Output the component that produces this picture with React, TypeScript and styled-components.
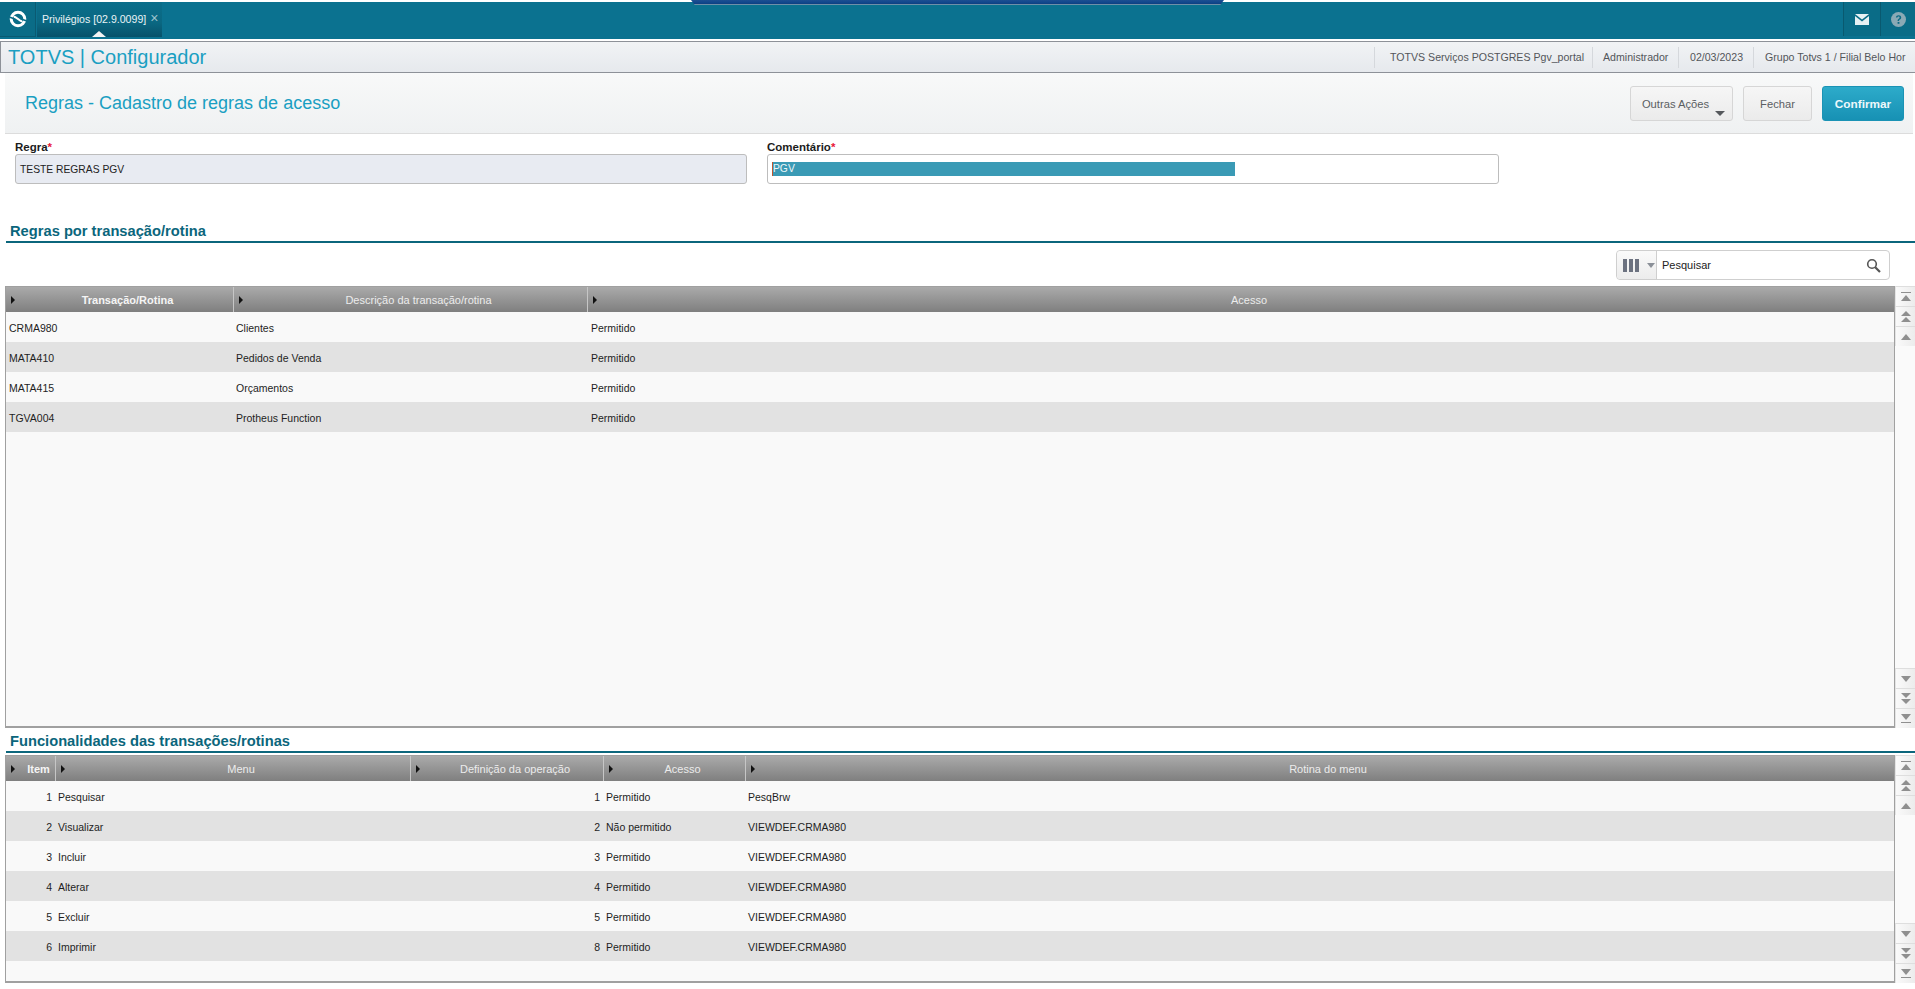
import React from "react";
import styled, { createGlobalStyle } from "styled-components";

const Global = createGlobalStyle`
  html, body { margin: 0; padding: 0; background: #fff; overflow: hidden; }
  body { font-family: "Liberation Sans", Arial, sans-serif; }
`;

const Page = styled.div`
  position: relative;
  width: 1915px;
  height: 989px;
  overflow: hidden;
  display: flex;
  flex-direction: column;
  padding-top: 2px;
  box-sizing: border-box;
`;

const Notch = styled.div`
  position: absolute;
  left: 691px;
  top: 0;
  width: 533px;
  height: 5px;
  background: linear-gradient(#1d4f92, #12478c 60%, #0f3f80);
  border-bottom: 1px solid #6f8fa8;
  box-sizing: border-box;
  clip-path: polygon(0 0, 100% 0, 99.3% 100%, 0.7% 100%);
`;

const TopBar = styled.div`
  height: 37px;
  flex: none;
  background: #0b7290;
  display: flex;
  align-items: stretch;
`;

const HomeTile = styled.div`
  width: 36px;
  height: 35px;
  background: #0a6c87;
  border-right: 1px solid #0a5a72;
  border-bottom: 1px solid #0a5a72;
  box-sizing: border-box;
  display: flex;
  align-items: center;
  justify-content: center;
`;

const Tab = styled.div`
  position: relative;
  margin-left: 1px;
  width: 125px;
  height: 35px;
  box-sizing: border-box;
  background: linear-gradient(#0b6e8b 0%, #0a6781 60%, #07526a 100%);
  display: flex;
  align-items: center;
  padding: 0 0 2px 5px;
  color: #e9f3f6;
  font-size: 10.6px;
  white-space: nowrap;
`;

const TabClose = styled.span`
  margin-left: 4px;
  color: #9cc3cf;
  font-size: 14px;
  position: relative;
  top: -1px;
`;

const TabPointer = styled.div`
  position: absolute;
  left: 55px;
  bottom: 0;
  width: 0;
  height: 0;
  border-left: 7px solid transparent;
  border-right: 7px solid transparent;
  border-bottom: 6px solid #f4f4f4;
`;

const TopSpacer = styled.div`
  flex: 1;
`;

const IconTile = styled.div<{ $w: number }>`
  width: ${(p) => p.$w}px;
  height: 34px;
  background: #0a6c87;
  border-left: 1px solid #09596f;
  box-sizing: border-box;
  display: flex;
  align-items: center;
  justify-content: center;
`;

const AppBar = styled.div`
  margin-top: 2px;
  height: 32px;
  flex: none;
  box-sizing: border-box;
  background: linear-gradient(#f1f3f5, #e6e9ed);
  border-top: 1px solid #8d9198;
  border-bottom: 1px solid #8d9198;
  border-left: 1px solid #8d9198;
  display: flex;
  align-items: center;
`;

const AppName = styled.div`
  flex: 1;
  padding-left: 7px;
  font-size: 20px;
  color: #1a9fc2;
  white-space: nowrap;
`;

const AppInfo = styled.div<{ $w: number; $pad: number }>`
  display: flex;
  align-items: center;
  height: 21px;
  width: ${(p) => p.$w}px;
  padding-left: ${(p) => p.$pad}px;
  border-left: 1px solid #d5d8dc;
  font-size: 10.6px;
  color: #53565a;
  white-space: nowrap;
  box-sizing: border-box;
`;

const TitleBand = styled.div`
  margin-left: 5px;
  margin-right: 2px;
  height: 61px;
  flex: none;
  box-sizing: border-box;
  background: linear-gradient(#f8f9f9, #eff1f2);
  border-bottom: 1px solid #dcdcdc;
  display: flex;
  align-items: flex-start;
  padding: 13px 9px 0 20px;
  gap: 10px;
`;

const PageTitle = styled.div`
  flex: 1;
  font-size: 18px;
  line-height: 35px;
  color: #1a9fc2;
  white-space: nowrap;
`;

const ActionButton = styled.div<{ $w: number; $primary?: boolean }>`
  position: relative;
  width: ${(p) => p.$w}px;
  height: 35px;
  box-sizing: border-box;
  border-radius: 3px;
  border: 1px solid ${(p) => (p.$primary ? "#1a93b5" : "#d6d6d6")};
  background: ${(p) =>
    p.$primary ? "linear-gradient(#2dabca, #1791b4)" : "linear-gradient(#f6f6f6, #ebebeb)"};
  color: ${(p) => (p.$primary ? "#eef8fb" : "#5b5e62")};
  font-weight: ${(p) => (p.$primary ? 700 : 400)};
  font-size: ${(p) => (p.$primary ? 11.8 : 11.2)}px;
  display: flex;
  align-items: center;
  justify-content: center;
`;

const MoreLabel = styled.span`
  margin-right: 12px;
`;

const DropCaret = styled.div`
  position: absolute;
  right: 7px;
  bottom: 4px;
  width: 0;
  height: 0;
  border-left: 5px solid transparent;
  border-right: 5px solid transparent;
  border-top: 5px solid #55585c;
`;

const FormRow = styled.div`
  flex: none;
  height: 78px;
  box-sizing: border-box;
  padding: 6px 0 0 15px;
  display: grid;
  grid-template-columns: 732px 732px;
  column-gap: 20px;
`;

const Field = styled.div`
  display: flex;
  flex-direction: column;
`;

const FieldLabel = styled.div`
  height: 14px;
  font-size: 11.5px;
  font-weight: 700;
  color: #1c1c1c;
  line-height: 15px;
`;

const Req = styled.span`
  color: #e8173a;
`;

const FieldBox = styled.div<{ $readonly?: boolean }>`
  height: 30px;
  box-sizing: border-box;
  border: 1px solid #bdbdbd;
  border-radius: 3px;
  background: ${(p) => (p.$readonly ? "#e8ebf2" : "#fff")};
  display: flex;
  align-items: center;
  padding-left: 4px;
  font-size: 10.3px;
  color: #222;
`;

const Selected = styled.div`
  width: 463px;
  height: 14px;
  line-height: 14px;
  background: #3a9ab5;
  color: #eef6f8;
  border-left: 1px solid #c0562f;
  box-sizing: border-box;
`;

const SectionTitle = styled.div<{ $h: number }>`
  flex: none;
  margin-left: 6px;
  height: ${(p) => p.$h}px;
  box-sizing: border-box;
  border-bottom: 2px solid #0b667c;
  padding: 0 0 2px 4px;
  display: flex;
  align-items: flex-end;
  font-size: 14.7px;
  line-height: 16px;
  font-weight: 700;
  color: #0b667c;
  white-space: nowrap;
`;

const SearchRow = styled.div`
  flex: none;
  height: 43px;
  display: flex;
  align-items: flex-start;
  justify-content: flex-end;
  padding: 7px 25px 0 0;
  box-sizing: border-box;
`;

const SearchBox = styled.div`
  width: 274px;
  height: 30px;
  box-sizing: border-box;
  border: 1px solid #cfcfcf;
  border-radius: 4px;
  display: flex;
  align-items: stretch;
  background: #fff;
`;

const SearchToggle = styled.div`
  width: 40px;
  box-sizing: border-box;
  border-right: 1px solid #cfcfcf;
  background: linear-gradient(#fafafa, #ececec);
  border-radius: 4px 0 0 4px;
  display: flex;
  align-items: center;
  padding-left: 6px;
  gap: 8px;
`;

const ColBars = styled.div`
  display: flex;
  gap: 2px;
`;

const ColBar = styled.div`
  width: 4px;
  height: 13px;
  background: #6c7280;
`;

const SmallCaret = styled.div`
  width: 0;
  height: 0;
  border-left: 4px solid transparent;
  border-right: 4px solid transparent;
  border-top: 5px solid #8b9098;
`;

const SearchText = styled.div`
  flex: 1;
  display: flex;
  align-items: center;
  padding-left: 5px;
  font-size: 11px;
  color: #222;
`;

const SearchIcon = styled.div`
  display: flex;
  align-items: center;
  padding-right: 8px;
`;

const GridArea = styled.div<{ $h: number; $top?: number }>`
  flex: none;
  height: ${(p) => p.$h}px;
  margin-top: ${(p) => p.$top ?? 0}px;
  margin-left: 5px;
  display: flex;
`;

const Table = styled.div`
  width: 1890px;
  flex: none;
  box-sizing: border-box;
  border: 1px solid #a0a0a0;
  border-bottom-width: 2px;
  background: #f9f9f9;
  display: flex;
  flex-direction: column;
  overflow: hidden;
`;

const Row = styled.div<{ $cols: string; $alt?: boolean }>`
  display: grid;
  grid-template-columns: ${(p) => p.$cols};
  height: 30px;
  flex: none;
  background: ${(p) => (p.$alt ? "#e2e2e2" : "#f9f9f9")};
  font-size: 10.5px;
  color: #1e1e1e;
`;

const HeadRow = styled.div<{ $cols: string }>`
  display: grid;
  grid-template-columns: ${(p) => p.$cols};
  height: 25px;
  flex: none;
  background: linear-gradient(#aaaaaa, #7f7f7f);
  font-size: 11px;
`;

const HeadCell = styled.div<{ $strong?: boolean }>`
  display: flex;
  align-items: center;
  padding-left: 5px;
  border-right: 1px solid #c6c6c6;
  box-sizing: border-box;
  color: ${(p) => (p.$strong ? "#f5f5f5" : "#ececec")};
  font-weight: ${(p) => (p.$strong ? 700 : 400)};
  white-space: nowrap;
  &:last-child { border-right: 0; }
`;

const HeadArrow = styled.div`
  flex: none;
  width: 0;
  height: 0;
  border-top: 4px solid transparent;
  border-bottom: 4px solid transparent;
  border-left: 4px solid #111;
  margin-right: 7px;
`;

const HeadLabel = styled.div`
  flex: 1;
  text-align: center;
`;

const Cell = styled.div<{ $right?: boolean; $inset?: number }>`
  display: flex;
  align-items: center;
  justify-content: ${(p) => (p.$right ? "flex-end" : "flex-start")};
  padding: ${(p) => (p.$right ? "1px 4px 0 0" : `1px 0 0 ${p.$inset ?? 2}px`)};
  white-space: nowrap;
  box-sizing: border-box;
`;

const ScrollColumn = styled.div`
  flex: 1;
  display: flex;
  flex-direction: column;
  justify-content: space-between;
  background: #fafafa;
`;

const ScrollGroup = styled.div`
  display: flex;
  flex-direction: column;
`;

const ScrollBtn = styled.div`
  height: 20px;
  box-sizing: border-box;
  background: linear-gradient(90deg, #fafafa, #ececec);
  border-top: 1px solid #dedede;
  border-left: 1px solid #e4e4e4;
  display: flex;
  align-items: center;
  justify-content: center;
`;

const ScrollSvg = styled.svg`
  display: block;
  fill: #8f8f8f;
`;

const Logo = () => (
  <svg width="20" height="20" viewBox="0 0 20 20">
    <circle cx="10" cy="10" r="6.8" fill="none" stroke="#fff" strokeWidth="3" />
    <path d="M5.5 7.6 C8 7.2 12 12.8 14.5 12.4" fill="none" stroke="#fff" strokeWidth="2.2" />
    <path d="M1.8 8.2 L5.6 9.6 M18.2 11.8 L14.4 10.4" fill="none" stroke="#0a6c87" strokeWidth="1.6" />
  </svg>
);

const Mail = () => (
  <svg width="14" height="11" viewBox="0 0 14 11">
    <path d="M0 0h14L7 5.5z" fill="#e6f0f3" />
    <path d="M0 2l7 5.5L14 2v9H0z" fill="#e6f0f3" />
  </svg>
);

const Help = () => (
  <svg width="15" height="15" viewBox="0 0 15 15">
    <circle cx="7.5" cy="7.5" r="7.5" fill="#8aa9b5" />
    <path d="M4.9 5.6c.2-1.6 1.2-2.4 2.7-2.4 1.5 0 2.6.9 2.6 2.2 0 1-.5 1.5-1.3 2.1-.7.5-.9.8-.9 1.5H6.6c0-1.1.3-1.6 1.1-2.2.6-.5.9-.8.9-1.3 0-.5-.4-.9-1-.9-.7 0-1 .4-1.1 1z" fill="#0a6a85" />
    <rect x="6.6" y="10" width="1.8" height="1.8" fill="#0a6a85" />
  </svg>
);

const Magnifier = () => (
  <svg width="15" height="15" viewBox="0 0 15 15">
    <circle cx="6" cy="6" r="4.3" fill="none" stroke="#555" strokeWidth="1.6" />
    <path d="M9.2 9.2 L14 14" stroke="#555" strokeWidth="2.2" />
  </svg>
);

type ScrollKind = "first" | "pageUp" | "up" | "down" | "pageDown" | "last";

const ScrollIcon = ({ kind }: { kind: ScrollKind }) => {
  const shapes: Record<ScrollKind, React.ReactNode> = {
    first: (<><rect x="1" y="1" width="10" height="1" /><path d="M6 4l5 6H1z" /></>),
    pageUp: (<><path d="M6 0l5 5H1z" /><path d="M6 6l5 5H1z" /></>),
    up: <path d="M6 3l5 6H1z" />,
    down: <path d="M1 3h10l-5 6z" />,
    pageDown: (<><path d="M1 0h10L6 5z" /><path d="M1 6h10l-5 5z" /></>),
    last: (<><path d="M1 1h10L6 7z" /><rect x="1" y="9" width="10" height="1" /></>),
  };
  return <ScrollSvg width="12" height="12" viewBox="0 0 12 12">{shapes[kind]}</ScrollSvg>;
};

const ScrollBar = () => (
  <ScrollColumn>
    <ScrollGroup>
      {(["first", "pageUp", "up"] as ScrollKind[]).map((k) => (
        <ScrollBtn key={k}><ScrollIcon kind={k} /></ScrollBtn>
      ))}
    </ScrollGroup>
    <ScrollGroup>
      {(["down", "pageDown", "last"] as ScrollKind[]).map((k) => (
        <ScrollBtn key={k}><ScrollIcon kind={k} /></ScrollBtn>
      ))}
    </ScrollGroup>
  </ScrollColumn>
);

const cols1 = "228px 354px 1fr";
const rows1 = [
  ["CRMA980", "Clientes", "Permitido"],
  ["MATA410", "Pedidos de Venda", "Permitido"],
  ["MATA415", "Orçamentos", "Permitido"],
  ["TGVA004", "Protheus Function", "Permitido"],
];

const cols2 = "50px 355px 193px 142px 1fr";
const rows2 = [
  ["1", "Pesquisar", "1", "Permitido", "PesqBrw"],
  ["2", "Visualizar", "2", "Não permitido", "VIEWDEF.CRMA980"],
  ["3", "Incluir", "3", "Permitido", "VIEWDEF.CRMA980"],
  ["4", "Alterar", "4", "Permitido", "VIEWDEF.CRMA980"],
  ["5", "Excluir", "5", "Permitido", "VIEWDEF.CRMA980"],
  ["6", "Imprimir", "8", "Permitido", "VIEWDEF.CRMA980"],
];

export default function App() {
  return (
    <Page>
      <Global />
      <Notch />
      <TopBar>
        <HomeTile><Logo /></HomeTile>
        <Tab>
          Privilégios [02.9.0099]
          <TabClose>×</TabClose>
          <TabPointer />
        </Tab>
        <TopSpacer />
        <IconTile $w={37}><Mail /></IconTile>
        <IconTile $w={35}><Help /></IconTile>
      </TopBar>
      <AppBar>
        <AppName>TOTVS | Configurador</AppName>
        <AppInfo $w={218} $pad={15}>TOTVS Serviços POSTGRES Pgv_portal</AppInfo>
        <AppInfo $w={86} $pad={10}>Administrador</AppInfo>
        <AppInfo $w={75} $pad={11}>02/03/2023</AppInfo>
        <AppInfo $w={162} $pad={11}>Grupo Totvs 1 / Filial Belo Hor</AppInfo>
      </AppBar>
      <TitleBand>
        <PageTitle>Regras - Cadastro de regras de acesso</PageTitle>
        <ActionButton $w={103}>
          <MoreLabel>Outras Ações</MoreLabel>
          <DropCaret />
        </ActionButton>
        <ActionButton $w={69}>Fechar</ActionButton>
        <ActionButton $w={82} $primary>Confirmar</ActionButton>
      </TitleBand>
      <FormRow>
        <Field>
          <FieldLabel>Regra<Req>*</Req></FieldLabel>
          <FieldBox $readonly>TESTE REGRAS PGV</FieldBox>
        </Field>
        <Field>
          <FieldLabel>Comentário<Req>*</Req></FieldLabel>
          <FieldBox><Selected>PGV</Selected></FieldBox>
        </Field>
      </FormRow>
      <SectionTitle $h={31}>Regras por transação/rotina</SectionTitle>
      <SearchRow>
        <SearchBox>
          <SearchToggle>
            <ColBars><ColBar /><ColBar /><ColBar /></ColBars>
            <SmallCaret />
          </SearchToggle>
          <SearchText>Pesquisar</SearchText>
          <SearchIcon><Magnifier /></SearchIcon>
        </SearchBox>
      </SearchRow>
      <GridArea $h={442}>
        <Table>
          <HeadRow $cols={cols1}>
            <HeadCell $strong><HeadArrow /><HeadLabel>Transação/Rotina</HeadLabel></HeadCell>
            <HeadCell><HeadArrow /><HeadLabel>Descrição da transação/rotina</HeadLabel></HeadCell>
            <HeadCell><HeadArrow /><HeadLabel>Acesso</HeadLabel></HeadCell>
          </HeadRow>
          {rows1.map((r, i) => (
            <Row key={r[0]} $cols={cols1} $alt={i % 2 === 1}>
              <Cell $inset={3}>{r[0]}</Cell>
              <Cell>{r[1]}</Cell>
              <Cell $inset={3}>{r[2]}</Cell>
            </Row>
          ))}
        </Table>
        <ScrollBar />
      </GridArea>
      <SectionTitle $h={25}>Funcionalidades das transações/rotinas</SectionTitle>
      <GridArea $h={228} $top={2}>
        <Table>
          <HeadRow $cols={cols2}>
            <HeadCell $strong><HeadArrow /><HeadLabel>Item</HeadLabel></HeadCell>
            <HeadCell><HeadArrow /><HeadLabel>Menu</HeadLabel></HeadCell>
            <HeadCell><HeadArrow /><HeadLabel>Definição da operação</HeadLabel></HeadCell>
            <HeadCell><HeadArrow /><HeadLabel>Acesso</HeadLabel></HeadCell>
            <HeadCell><HeadArrow /><HeadLabel>Rotina do menu</HeadLabel></HeadCell>
          </HeadRow>
          {rows2.map((r, i) => (
            <Row key={r[1]} $cols={cols2} $alt={i % 2 === 1}>
              <Cell $right>{r[0]}</Cell>
              <Cell>{r[1]}</Cell>
              <Cell $right>{r[2]}</Cell>
              <Cell>{r[3]}</Cell>
              <Cell>{r[4]}</Cell>
            </Row>
          ))}
        </Table>
        <ScrollBar />
      </GridArea>
    </Page>
  );
}
